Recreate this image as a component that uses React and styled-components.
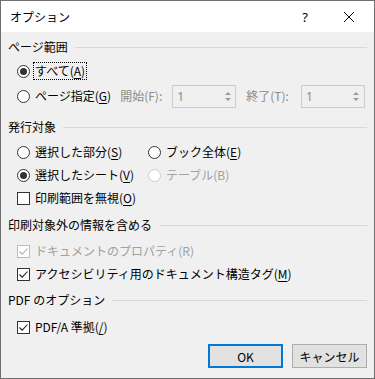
import React from "react";
import styled, { createGlobalStyle } from "styled-components";

const Global = createGlobalStyle`
  html, body { margin: 0; padding: 0; background: #f0f0f0; }
  body { font-family: "Noto Sans CJK JP", "Noto Sans", sans-serif; font-size: 12px; color: #000; }
`;

const Dialog = styled.div`
  width: 375px;
  height: 379px;
  box-sizing: border-box;
  border: 1px solid #6f6f6f;
  background: #f0f0f0;
  display: flex;
  flex-direction: column;
`;

const TitleBar = styled.div`
  height: 31px;
  background: #fff;
  display: flex;
  align-items: center;
  padding-left: 9px;
  padding-right: 2px;
  flex: none;
`;

const Title = styled.div`
  flex: 1;
  font-size: 12px;
  line-height: 16px;
`;

const TitleButton = styled.div`
  width: ${(p) => p.$w}px;
  height: 31px;
  display: flex;
  align-items: center;
  justify-content: center;
  font-size: 13px;
  font-family: "Noto Sans", sans-serif;
`;

const Body = styled.div`
  flex: 1;
  display: flex;
  flex-direction: column;
  padding: 7px 7px 0 7px;
`;

const Heading = styled.div`
  display: flex;
  align-items: center;
  height: 16px;
  line-height: 16px;
  margin-top: ${(p) => p.$mt || 0}px;
  margin-bottom: ${(p) => p.$mb || 6}px;
  span { white-space: nowrap; padding-right: 7px; }
  &::after {
    content: "";
    flex: 1;
    border-top: 1px solid #d8d8d8;
    margin-top: 1px;
  }
`;

const Row = styled.div`
  display: flex;
  align-items: center;
  height: ${(p) => p.$h || 22}px;
  margin-left: 9px;
  margin-top: ${(p) => p.$mt || 0}px;
`;

const Col = styled.div`
  display: flex;
  align-items: center;
  width: ${(p) => (p.$w ? p.$w + "px" : "auto")};
  flex: none;
`;

const Label = styled.span`
  color: ${(p) => (p.$disabled ? "#a0a0a0" : "#000")};
  line-height: 16px;
  white-space: nowrap;
  margin-left: ${(p) => p.$ml ?? 4}px;
  padding: 0 1px;
  outline: ${(p) => (p.$focus ? "1px dotted #000" : "none")};
  u { text-decoration: underline; text-underline-offset: 2px; }
`;

const RadioCircle = styled.span`
  width: 13px;
  height: 13px;
  box-sizing: border-box;
  border-radius: 50%;
  border: 1px solid ${(p) => (p.$disabled ? "#cccccc" : "#333")};
  background: #fff;
  display: flex;
  align-items: center;
  justify-content: center;
  flex: none;
  &::after {
    content: "";
    width: 7px;
    height: 7px;
    border-radius: 50%;
    background: #333;
    display: ${(p) => (p.$checked ? "block" : "none")};
  }
`;

const CheckBox = styled.span`
  width: 13px;
  height: 13px;
  box-sizing: border-box;
  border: 1px solid ${(p) => (p.$disabled ? "#bcbcbc" : "#333")};
  background: #fff;
  display: flex;
  align-items: center;
  justify-content: center;
  flex: none;
`;

const Radio = ({ checked, disabled, focus, children }) => (
  <>
    <RadioCircle $checked={checked} $disabled={disabled} />
    <Label $disabled={disabled} $focus={focus}>{children}</Label>
  </>
);

const Check = ({ checked, disabled, children }) => (
  <>
    <CheckBox $disabled={disabled}>
      {checked && (
        <svg width="11" height="11" viewBox="0 0 11 11">
          <path d="M1.5 5.5 L4.2 8.2 L9.5 2.5" fill="none" stroke={disabled ? "#b0b0b0" : "#222"} strokeWidth="1.1" />
        </svg>
      )}
    </CheckBox>
    <Label $disabled={disabled}>{children}</Label>
  </>
);

const SpinText = styled.span`
  color: #8a8a8a;
  line-height: 16px;
  white-space: nowrap;
  margin-left: ${(p) => p.$ml}px;
`;

const Spin = styled.div`
  width: 64px;
  height: 23px;
  box-sizing: border-box;
  border: 1px solid #cccccc;
  background: #f0f0f0;
  display: flex;
  margin-left: ${(p) => p.$ml}px;
`;

const SpinValue = styled.div`
  flex: 1;
  color: #8a8a8a;
  font-family: "Noto Sans", sans-serif;
  font-size: 12px;
  line-height: 21px;
  padding-left: 4px;
`;

const SpinButtons = styled.div`
  width: 15px;
  display: flex;
  flex-direction: column;
  align-items: center;
  justify-content: center;
  gap: 3px;
`;

const Arrow = styled.span`
  width: 0;
  height: 0;
  border-left: 3px solid transparent;
  border-right: 3px solid transparent;
  ${(p) => (p.$up ? "border-bottom: 3px solid #9a9a9a;" : "border-top: 3px solid #9a9a9a;")}
`;

const SpinBox = ({ ml }) => (
  <Spin $ml={ml}>
    <SpinValue>1</SpinValue>
    <SpinButtons>
      <Arrow $up />
      <Arrow />
    </SpinButtons>
  </Spin>
);

const Footer = styled.div`
  display: flex;
  justify-content: flex-end;
  gap: 9px;
  margin-top: 6px;
`;

const Button = styled.div`
  width: 75px;
  height: 24px;
  box-sizing: border-box;
  border: ${(p) => (p.$primary ? "2px solid #0078d7" : "1px solid #adadad")};
  background: #e1e1e1;
  display: flex;
  align-items: center;
  justify-content: center;
  font-size: 12px;
`;

export default function App() {
  return (
    <>
      <Global />
      <Dialog>
        <TitleBar>
          <Title>オプション</Title>
          <TitleButton $w={42}>?</TitleButton>
          <TitleButton $w={46}>
            <svg width="12" height="12" viewBox="0 0 12 12">
              <path d="M1 1 L11 11 M11 1 L1 11" stroke="#000" strokeWidth="1" fill="none" />
            </svg>
          </TitleButton>
        </TitleBar>
        <Body>
          <Heading><span>ページ範囲</span></Heading>
          <Row $h={20}>
            <Radio checked focus>すべて(<u>A</u>)</Radio>
          </Row>
          <Row $h={24} $mt={3}>
            <Radio>ページ指定(<u>G</u>)</Radio>
            <SpinText $ml={8}>開始(F):</SpinText>
            <SpinBox ml={10} />
            <SpinText $ml={10}>終了(T):</SpinText>
            <SpinBox ml={12} />
          </Row>

          <Heading $mt={11}><span>発行対象</span></Heading>
          <Row>
            <Col $w={131}><Radio>選択した部分(<u>S</u>)</Radio></Col>
            <Col><Radio>ブック全体(<u>E</u>)</Radio></Col>
          </Row>
          <Row $mt={1}>
            <Col $w={131}><Radio checked>選択したシート(<u>V</u>)</Radio></Col>
            <Col><Radio disabled>テーブル(B)</Radio></Col>
          </Row>
          <Row $mt={1}>
            <Check>印刷範囲を無視(<u>O</u>)</Check>
          </Row>

          <Heading $mt={8} $mb={7}><span>印刷対象外の情報を含める</span></Heading>
          <Row>
            <Check checked disabled>ドキュメントのプロパティ(R)</Check>
          </Row>
          <Row $mt={1}>
            <Check checked>アクセシビリティ用のドキュメント構造タグ(<u>M</u>)</Check>
          </Row>

          <Heading $mt={7} $mb={8}><span>PDF のオプション</span></Heading>
          <Row>
            <Check checked>PDF/A 準拠(<u>/</u>)</Check>
          </Row>

          <Footer>
            <Button $primary>OK</Button>
            <Button>キャンセル</Button>
          </Footer>
        </Body>
      </Dialog>
    </>
  );
}
